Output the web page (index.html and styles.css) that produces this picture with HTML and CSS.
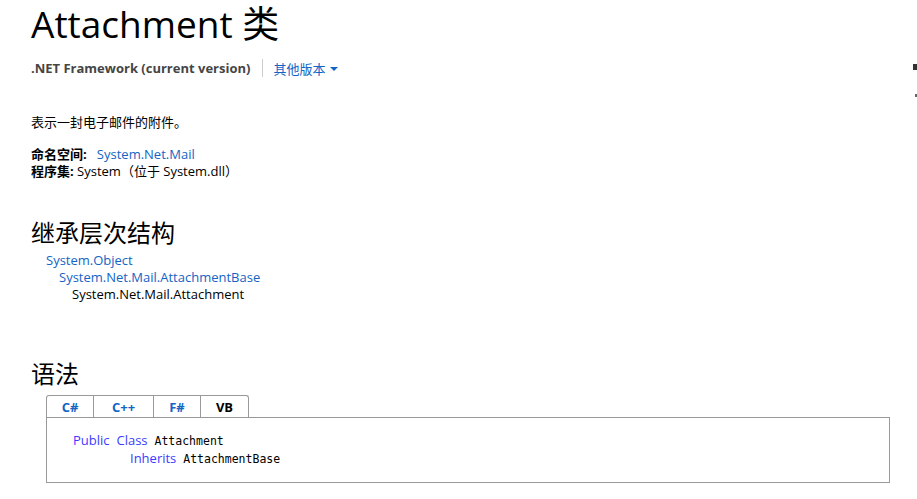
FILE: index.html
```html
<!DOCTYPE html>
<html lang="zh-CN">
<head>
<meta charset="utf-8">
<link rel="stylesheet" href="styles.css">
</head>
<body>
<div class="page">
  <h1 class="title">Attachment 类</h1>
  <div class="versions">
    <span class="fw">.NET Framework (current version)</span>
    <span class="sep"></span>
    <a class="other">其他版本 <span class="caret"></span></a>
  </div>
  <p class="summary">表示一封电子邮件的附件。</p>
  <div class="meta">
    <div><b>命名空间:</b>&nbsp;&nbsp; <a class="link">System.Net.Mail</a></div>
    <div><b>程序集:</b>&nbsp;System（位于 System.dll）</div>
  </div>
  <h2 class="sect sect-inh">继承层次结构</h2>
  <div class="inh">
    <a class="link lvl0">System.Object</a>
    <a class="link lvl1">System.Net.Mail.AttachmentBase</a>
    <span class="lvl2">System.Net.Mail.Attachment</span>
  </div>
  <h2 class="sect sect-syn">语法</h2>
  <div class="tabs">
    <div class="tab t1">C#</div>
    <div class="tab t2">C++</div>
    <div class="tab t3">F#</div>
    <div class="tab t4 active">VB</div>
  </div>
  <div class="code">
    <div class="cl"><span class="kw">Public</span> <span class="kw">Class</span> Attachment</div>
    <div class="cl ind"><span class="kw">Inherits</span> AttachmentBase</div>
  </div>
</div>
<div class="edge e1"></div>
<div class="edge e2"></div>
</body>
</html>
```
FILE: styles.css
```css
html, body {
  margin: 0;
  padding: 0;
  background: #fff;
}
body {
  font-family: "Segoe UI", "Open Sans", "Noto Sans CJK SC", sans-serif;
  color: #000;
  font-size: 13px;
}
.page {
  padding-left: 31px;
  width: 859px;
}
.title {
  margin: 0;
  font-weight: 400;
  font-size: 37px;
  line-height: 48px;
  height: 48px;
}
.versions {
  margin-top: 10px;
  display: flex;
  align-items: center;
  height: 20px;
  font-size: 13px;
}
.fw {
  font-weight: 700;
  color: #454545;
}
.sep {
  display: inline-block;
  width: 1px;
  height: 18px;
  background: #ccc;
  margin: 0 10px 0 12px;
}
.other {
  color: #1364c4;
  display: flex;
  align-items: center;
}
.caret {
  display: inline-block;
  width: 0;
  height: 0;
  border-left: 4px solid transparent;
  border-right: 4px solid transparent;
  border-top: 4px solid #1364c4;
  margin-left: 5px;
  margin-top: 2px;
}
.summary {
  margin: 36px 0 0 0;
  line-height: 17px;
}
.meta {
  margin-top: 15px;
  line-height: 17px;
}
.link {
  color: #1364c4;
}
.sect {
  margin: 0;
  font-weight: 400;
  font-size: 24px;
  line-height: 30px;
}
.sect-inh {
  margin-top: 38px;
}
.inh {
  display: flex;
  flex-direction: column;
  line-height: 17px;
  margin-top: 4px;
}
.lvl0 { padding-left: 15px; }
.lvl1 { padding-left: 28px; }
.lvl2 { padding-left: 41px; }
.sect-syn {
  margin-top: 56px;
}
.tabs {
  display: flex;
  margin-left: 15px;
  margin-top: 6px;
  height: 23px;
}
.tab {
  box-sizing: border-box;
  height: 23px;
  border: 1px solid #999;
  border-bottom: none;
  border-left: none;
  display: flex;
  align-items: center;
  justify-content: center;
  font-weight: 700;
  font-size: 13px;
  color: #1364c4;
}
.t1 { width: 48px; border-left: 1px solid #999; border-top-left-radius: 3px; }
.t2 { width: 60px; }
.t3 { width: 47px; }
.t4 { width: 48px; border-top-right-radius: 3px; color: #000; }
.code {
  margin-left: 15px;
  box-sizing: border-box;
  width: 844px;
  height: 66px;
  border: 1px solid #999;
  margin-top: -1px;
  padding: 14px 0 0 26px;
  font-family: "DejaVu Sans Mono", "Liberation Mono", monospace;
  font-size: 11.5px;
  line-height: 17px;
  color: #000;
}
.code .kw {
  font-family: "Segoe UI", "Open Sans", sans-serif;
  font-size: 13px;
  color: #3b3bff;
}
.code .ind {
  padding-left: 57px;
}
.edge {
  position: absolute;
  right: 0;
  background: #333;
  width: 4px;
}
.e1 { top: 64px; height: 6px; }
.e2 { top: 94px; height: 3px; width: 2px; background: #666; }
```
